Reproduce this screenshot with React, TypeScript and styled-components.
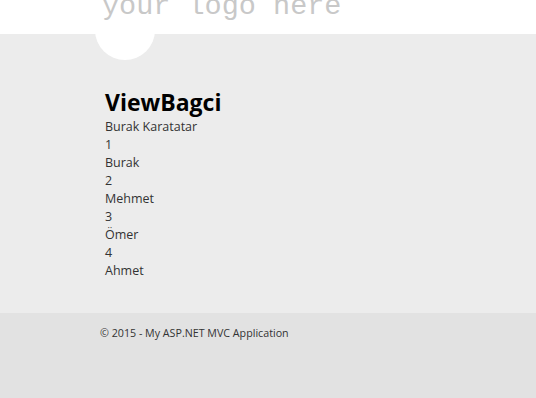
import styled, { createGlobalStyle } from 'styled-components';

const GlobalStyle = createGlobalStyle`
  html, body {
    margin: 0;
    padding: 0;
    background: #e2e2e2;
  }
  body {
    font-family: "Open Sans", "Noto Sans", sans-serif;
    color: #333;
  }
`;

const people = [
  { id: 1, name: 'Burak' },
  { id: 2, name: 'Mehmet' },
  { id: 3, name: 'Ömer' },
  { id: 4, name: 'Ahmet' },
];

export default function App() {
  return (
    <>
      <GlobalStyle />
      <Page>
        <Header>
          <Logo>your logo here</Logo>
        </Header>
        <Body>
          <Circle />
          <Title>ViewBagci</Title>
          <Line>Burak Karatatar</Line>
          {people.map((p) => (
            <div key={p.id}>
              <Line>{p.id}</Line>
              <Line>{p.name}</Line>
            </div>
          ))}
        </Body>
        <Footer>
          <FooterText>© 2015 - My ASP.NET MVC Application</FooterText>
        </Footer>
      </Page>
    </>
  );
}

const Page = styled.div`
  width: 536px;
  height: 398px;
  display: flex;
  flex-direction: column;
  overflow: hidden;
`;

const Header = styled.header`
  height: 34px;
  background: #fff;
  overflow: hidden;
  padding-left: 102px;
  position: relative;
  z-index: 1;
`;

const Logo = styled.div`
  font-family: "Liberation Mono", "DejaVu Sans Mono", monospace;
  font-size: 28.5px;
  color: #c8c8c8;
  line-height: 28px;
  margin-top: -7px;
  white-space: nowrap;
`;

const Body = styled.main`
  position: relative;
  background: #ececec;
  padding: 55px 0 33px 105px;
`;

const Circle = styled.div`
  position: absolute;
  left: 95px;
  top: -34px;
  width: 60px;
  height: 60px;
  border-radius: 50%;
  background: #fff;
`;

const Title = styled.h2`
  margin: 0 0 3px;
  font-size: 23px;
  line-height: 26px;
  font-weight: 700;
  color: #000;
`;

const Line = styled.div`
  font-size: 12.5px;
  line-height: 18px;
  color: #333;
`;

const Footer = styled.footer`
  flex: 1;
  background: #e2e2e2;
  padding: 12px 0 0 100px;
`;

const FooterText = styled.p`
  margin: 0;
  font-size: 10.7px;
  line-height: 16px;
  color: #333;
`;
